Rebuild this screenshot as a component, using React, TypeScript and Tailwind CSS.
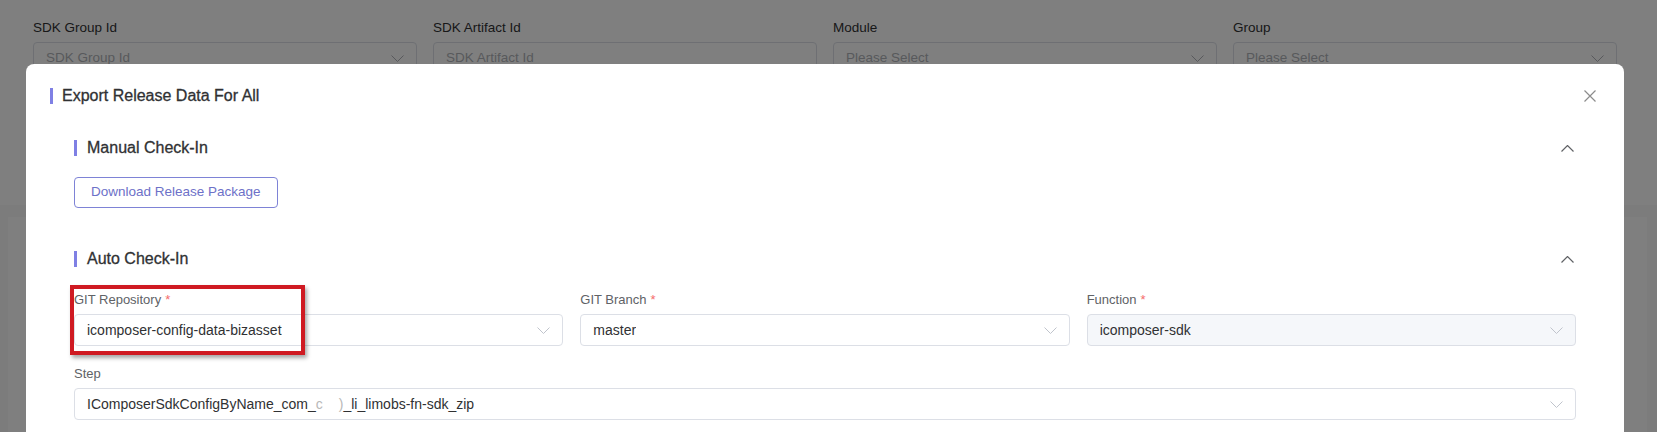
import React from 'react';

const font = "font-['Liberation_Sans',Arial,sans-serif]";

function ArrowDown({ color = '#c0c4cc' }: { color?: string }) {
  return (
    <svg width="13" height="7" viewBox="0 0 13 7" className="shrink-0">
      <path d="M0.5 0.5 L6.5 6.5 L12.5 0.5" fill="none" stroke={color} strokeWidth="1" />
    </svg>
  );
}

function ArrowUp() {
  return (
    <svg width="13" height="7" viewBox="0 0 13 7" className="shrink-0">
      <path d="M0.5 6.5 L6.5 0.5 L12.5 6.5" fill="none" stroke="#606266" strokeWidth="1.2" />
    </svg>
  );
}

function SectionTitle({ title }: { title: string }) {
  return (
    <div className="flex items-center justify-between h-[24px]">
      <div className="flex items-center">
        <span className="w-[3px] h-[16px] bg-[#7f80e4]" />
        <span className="ml-[10px] text-[16px] leading-[24px] text-[#303133] [-webkit-text-stroke:0.3px_#303133]">
          {title}
        </span>
      </div>
      <span className="mr-[2px]">
        <ArrowUp />
      </span>
    </div>
  );
}

function Select({ value, disabled }: { value: React.ReactNode; disabled?: boolean }) {
  return (
    <div
      className={`h-[32px] rounded-[4px] border border-[#dcdfe6] flex items-center justify-between px-[12px] text-[14px] text-[#303133] ${
        disabled ? 'bg-[#f5f7fa]' : 'bg-white'
      }`}
    >
      <span className="truncate">{value}</span>
      <ArrowDown />
    </div>
  );
}

function FormItem({ label, required, children }: { label: string; required?: boolean; children: React.ReactNode }) {
  return (
    <div className="relative">
      <div className="h-[20px] leading-[20px] text-[13px] text-[#606266]">
        {label}
        {required && <span className="ml-[4px] text-[#f56c6c]">*</span>}
      </div>
      <div className="mt-[4px]">{children}</div>
    </div>
  );
}

const filters = [
  { label: 'SDK Group Id', placeholder: 'SDK Group Id', arrow: true },
  { label: 'SDK Artifact Id', placeholder: 'SDK Artifact Id', arrow: false },
  { label: 'Module', placeholder: 'Please Select', arrow: true },
  { label: 'Group', placeholder: 'Please Select', arrow: true },
];

export default function App() {
  return (
    <div className={`${font} relative w-[1657px] h-[432px] overflow-hidden bg-[#f8f8f8]`}>
      {/* page under the mask */}
      <div className="bg-white h-[205px] pt-[18px] pl-[33px] pr-[40px]">
        <div className="grid grid-cols-4 gap-x-[16px]">
          {filters.map((f) => (
            <div key={f.label}>
              <div className="h-[20px] leading-[20px] text-[13.5px] text-[#303133]">{f.label}</div>
              <div className="mt-[4px] h-[32px] rounded-[4px] border border-[#dcdfe6] flex items-center justify-between px-[12px] text-[13.5px] text-[#b0b3b8]">
                <span>{f.placeholder}</span>
                {f.arrow && <ArrowDown color="#b0b3b8" />}
              </div>
            </div>
          ))}
        </div>
      </div>
      <div className="mt-[12px] ml-[8px] mr-[10px] h-[300px] bg-white" />

      {/* mask */}
      <div className="absolute inset-0 bg-black/50" />

      {/* dialog */}
      <div className="absolute left-[26px] top-[64px] w-[1598px] h-[420px] bg-white rounded-[8px]">
        <div className="relative pt-[20px] pl-[24px]">
          <div className="flex items-center h-[24px]">
            <span className="w-[3px] h-[16px] bg-[#7f80e4]" />
            <span className="ml-[9px] text-[16px] leading-[24px] text-[#303133] [-webkit-text-stroke:0.3px_#303133]">
              Export Release Data For All
            </span>
          </div>
          <button className="absolute right-[28px] top-[26px]">
            <svg width="12" height="12" viewBox="0 0 12 12">
              <path d="M0.5 0.5 L11.5 11.5 M11.5 0.5 L0.5 11.5" fill="none" stroke="#8c8c8c" strokeWidth="1.2" />
            </svg>
          </button>
        </div>

        <div className="px-[48px] pt-[28px]">
          <SectionTitle title="Manual Check-In" />
          <button className="mt-[17px] h-[31px] px-[16px] rounded-[4px] border border-[#7e83d6] text-[13.5px] text-[#6d71c8] bg-white">
            Download Release Package
          </button>

          <div className="mt-[39px]">
            <SectionTitle title="Auto Check-In" />
          </div>

          <div className="mt-[19px] grid grid-cols-3 gap-x-[17px]">
            <FormItem label="GIT Repository" required>
              <Select value="icomposer-config-data-bizasset" />
              <div className="absolute -left-[4px] -top-[5px] w-[235px] h-[70px] border-[4px] border-[#cf1a22] shadow-[2px_3px_4px_rgba(0,0,0,0.35)] pointer-events-none" />
            </FormItem>
            <FormItem label="GIT Branch" required>
              <Select value="master" />
            </FormItem>
            <FormItem label="Function" required>
              <Select value="icomposer-sdk" disabled />
            </FormItem>
          </div>

          <div className="mt-[18px]">
            <FormItem label="Step">
              <Select
                value={
                  <>
                    IComposerSdkConfigByName_com_
                    <span className="text-[#b8b8b8]">c</span>
                    <span className="inline-block w-[16px]" />
                    <span className="text-[#b8b8b8]">)</span>
                    _li_limobs-fn-sdk_zip
                  </>
                }
              />
            </FormItem>
          </div>
        </div>
      </div>
    </div>
  );
}
